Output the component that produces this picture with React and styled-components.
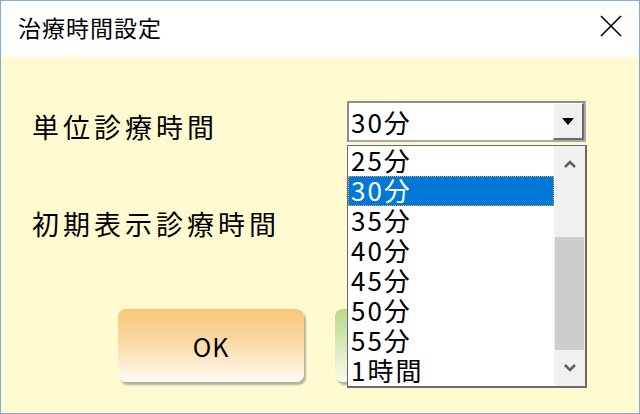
import React from 'react';
import styled, { createGlobalStyle } from 'styled-components';

const GlobalStyle = createGlobalStyle`
  html, body {
    margin: 0;
    padding: 0;
    background: #ffffff;
  }
  * {
    box-sizing: border-box;
  }
`;

const FONT = `"Noto Sans CJK JP", "Noto Sans", sans-serif`;

const Window = styled.div`
  width: 640px;
  height: 414px;
  border: 1px solid #80abdc;
  display: flex;
  flex-direction: column;
  font-family: ${FONT};
  color: #000;
`;

const TitleBar = styled.div`
  height: 56px;
  flex-shrink: 0;
  background: #ffffff;
  display: flex;
  align-items: center;
  justify-content: space-between;
  padding: 0 16px 0 17px;
`;

const Title = styled.div`
  font-size: 23px;
  letter-spacing: 1px;
  line-height: 1;
  margin-top: -3px;
`;

const CloseButton = styled.div`
  width: 24px;
  height: 24px;
  display: flex;
  align-items: center;
  justify-content: center;
  margin-top: -6px;
`;

const Body = styled.div`
  flex: 1;
  background: #fffad0;
  padding: 44px 0 0 29px;
  display: flex;
  flex-direction: column;
`;

const Form = styled.div`
  display: grid;
  grid-template-columns: 317px 239px;
  grid-auto-rows: 41px;
  row-gap: 56px;
`;

const Label = styled.div`
  font-size: 27px;
  letter-spacing: 4px;
  line-height: 41px;
  padding-top: 5px;
  padding-left: 2px;
  white-space: nowrap;
`;

const ComboWrap = styled.div`
  position: relative;
`;

const Combo = styled.div`
  height: 41px;
  background: #ffffff;
  border: 2px solid #8e8e8e;
  border-right-color: #a9a9a9;
  border-bottom-color: #a9a9a9;
  display: flex;
  align-items: stretch;
`;

const ComboValue = styled.div`
  flex: 1;
  font-size: 26px;
  letter-spacing: 2px;
  line-height: 37px;
  padding-left: 2px;
`;

const DropButton = styled.div`
  width: 31px;
  background: #f0f0f0;
  border-top: 1px solid #ffffff;
  border-left: 1px solid #ffffff;
  border-right: 2px solid #6b6b6b;
  border-bottom: 2px solid #6b6b6b;
  display: flex;
  align-items: center;
  justify-content: center;
`;

const DropList = styled.div`
  position: absolute;
  top: 44px;
  left: 0;
  width: 240px;
  height: 243px;
  background: #ffffff;
  border: 1px solid #6a6a6a;
  border-right-width: 2px;
  border-bottom-width: 2px;
  display: flex;
  z-index: 10;
`;

const Items = styled.div`
  flex: 1;
  display: flex;
  flex-direction: column;
`;

const Item = styled.div`
  height: 30px;
  font-size: 26px;
  letter-spacing: 2px;
  line-height: 28px;
  padding-left: 3px;
  background: ${(p) => (p.$selected ? '#0078d7' : 'transparent')};
  color: ${(p) => (p.$selected ? '#ffffff' : '#000000')};
  outline: ${(p) => (p.$selected ? '1px dotted #f5a13c' : 'none')};
  outline-offset: -1px;
  white-space: nowrap;
`;

const ScrollBar = styled.div`
  width: 31px;
  background: #f0f0f0;
  display: flex;
  flex-direction: column;
  align-items: center;
`;

const ScrollArrow = styled.div`
  height: 40px;
  width: 100%;
  display: flex;
  align-items: center;
  justify-content: center;
`;

const ScrollTrack = styled.div`
  flex: 1;
  width: 100%;
  padding: 54px 1px 0 1px;
`;

const Thumb = styled.div`
  height: 113px;
  background: #cdcdcd;
`;

const ButtonRow = styled.div`
  margin-top: 70px;
  padding-left: 88px;
  display: flex;
  gap: 31px;
`;

const Button = styled.div`
  width: 186px;
  height: 73px;
  border-radius: 8px;
  background: ${(p) =>
    p.$variant === 'green'
      ? 'linear-gradient(180deg, #b9d98a 0%, #dcecbe 55%, #f7fbef 100%)'
      : 'linear-gradient(180deg, #f8c677 0%, #fbdcab 50%, #fffcf6 100%)'};
  box-shadow: 2px 3px 2px rgba(90, 90, 90, 0.45);
  display: flex;
  align-items: center;
  justify-content: center;
  font-size: 25px;
  letter-spacing: 1px;
`;

const Triangle = () => (
  <svg width="12" height="7" viewBox="0 0 12 7">
    <polygon points="0,0 12,0 6,7" fill="#000" />
  </svg>
);

const Chevron = ({ up }) => (
  <svg width="12" height="8" viewBox="0 0 12 8">
    <polyline
      points={up ? '1,7 6,2 11,7' : '1,1 6,6 11,1'}
      fill="none"
      stroke="#606060"
      strokeWidth="2.6"
    />
  </svg>
);

const options = ['25分', '30分', '35分', '40分', '45分', '50分', '55分', '1時間'];

export default function App() {
  return (
    <>
      <GlobalStyle />
      <Window>
        <TitleBar>
          <Title>治療時間設定</Title>
          <CloseButton>
            <svg width="22" height="22" viewBox="0 0 22 22">
              <path d="M1 1 L21 21 M21 1 L1 21" stroke="#000" strokeWidth="1.6" />
            </svg>
          </CloseButton>
        </TitleBar>
        <Body>
          <Form>
            <Label>単位診療時間</Label>
            <ComboWrap>
              <Combo>
                <ComboValue>30分</ComboValue>
                <DropButton>
                  <Triangle />
                </DropButton>
              </Combo>
              <DropList>
                <Items>
                  {options.map((o) => (
                    <Item key={o} $selected={o === '30分'}>
                      {o}
                    </Item>
                  ))}
                </Items>
                <ScrollBar>
                  <ScrollArrow>
                    <Chevron up />
                  </ScrollArrow>
                  <ScrollTrack>
                    <Thumb />
                  </ScrollTrack>
                  <ScrollArrow>
                    <Chevron />
                  </ScrollArrow>
                </ScrollBar>
              </DropList>
            </ComboWrap>
            <Label>初期表示診療時間</Label>
            {/* second combo sits under the open list; only its frame matters */}
            <ComboWrap>
              <Combo>
                <ComboValue />
                <DropButton>
                  <Triangle />
                </DropButton>
              </Combo>
            </ComboWrap>
          </Form>
          <ButtonRow>
            <Button>OK</Button>
            <Button $variant="green" />
          </ButtonRow>
        </Body>
      </Window>
    </>
  );
}
